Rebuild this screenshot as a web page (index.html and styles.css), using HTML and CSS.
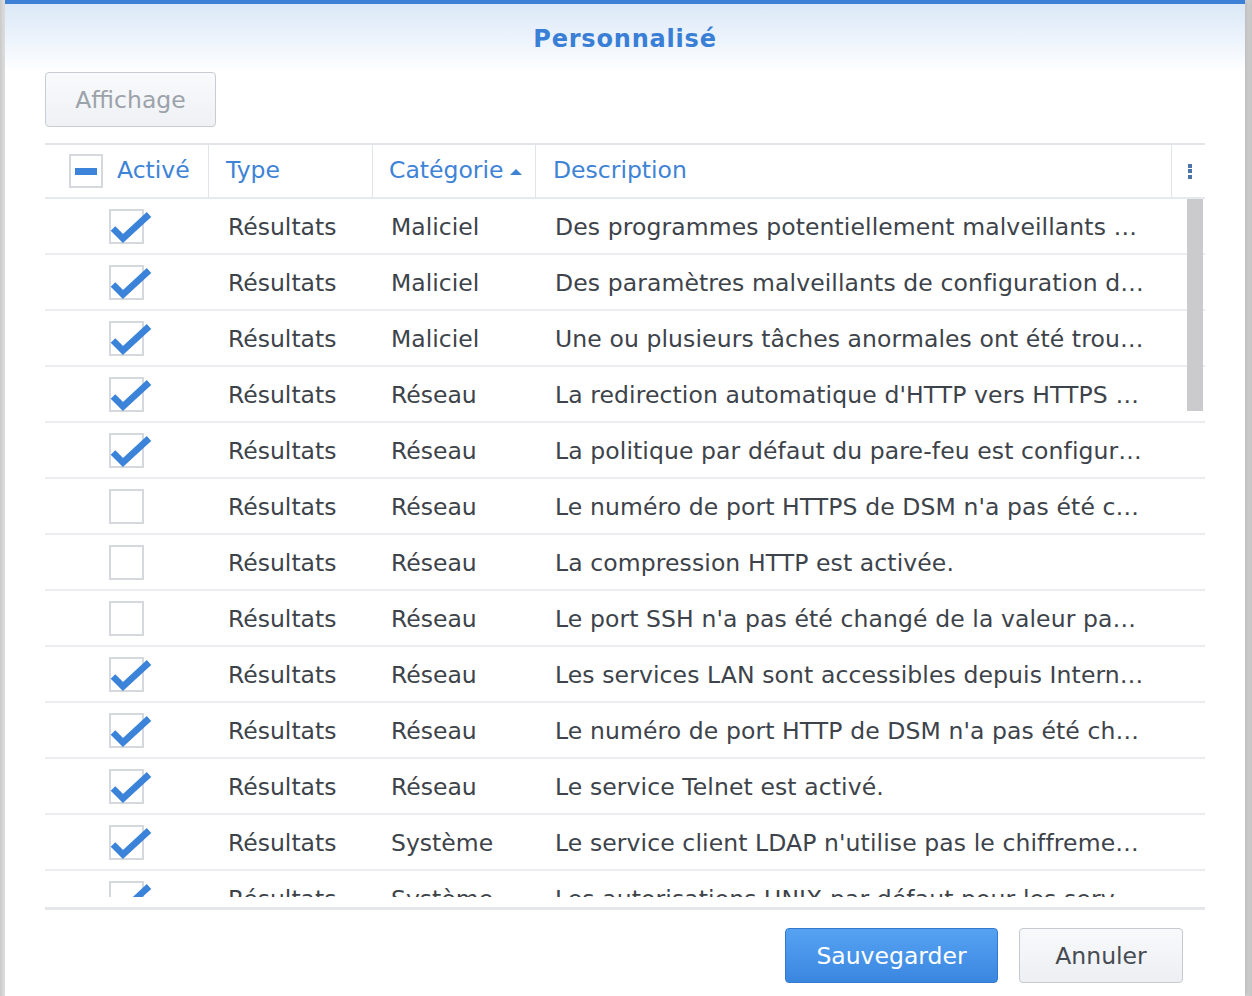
FILE: index.html
```html
<!DOCTYPE html>
<html lang="fr">
<head>
<meta charset="utf-8">
<title>Personnalisé</title>
<link rel="stylesheet" href="styles.css">
</head>
<body>
<div class="dialog">
  <div class="dlg-head"><h1 class="title">Personnalisé</h1></div>
  <div class="toolbar"><button class="btn btn-disabled">Affichage</button></div>
  <div class="grid">
    <div class="grid-head">
      <div class="hc hc-check"><span class="cb cb-head"><span class="minus"></span></span><span class="htext">Activé</span></div>
      <div class="hc hc-type"><span class="htext">Type</span></div>
      <div class="hc hc-cat"><span class="htext">Catégorie</span><span class="sort-up"></span></div>
      <div class="hc hc-desc"><span class="htext">Description</span></div>
      <div class="hc hc-menu"><span class="kebab"><i></i><i></i><i></i></span></div>
    </div>
    <div class="grid-body">
      <div class="row"><div class="c c-check"><span class="cb on"></span></div><div class="c c-type">Résultats</div><div class="c c-cat">Maliciel</div><div class="c c-desc">Des programmes potentiellement malveillants …</div></div>
      <div class="row"><div class="c c-check"><span class="cb on"></span></div><div class="c c-type">Résultats</div><div class="c c-cat">Maliciel</div><div class="c c-desc">Des paramètres malveillants de configuration d…</div></div>
      <div class="row"><div class="c c-check"><span class="cb on"></span></div><div class="c c-type">Résultats</div><div class="c c-cat">Maliciel</div><div class="c c-desc">Une ou plusieurs tâches anormales ont été trou…</div></div>
      <div class="row"><div class="c c-check"><span class="cb on"></span></div><div class="c c-type">Résultats</div><div class="c c-cat">Réseau</div><div class="c c-desc">La redirection automatique d'HTTP vers HTTPS …</div></div>
      <div class="row"><div class="c c-check"><span class="cb on"></span></div><div class="c c-type">Résultats</div><div class="c c-cat">Réseau</div><div class="c c-desc">La politique par défaut du pare-feu est configur…</div></div>
      <div class="row"><div class="c c-check"><span class="cb"></span></div><div class="c c-type">Résultats</div><div class="c c-cat">Réseau</div><div class="c c-desc">Le numéro de port HTTPS de DSM n'a pas été c…</div></div>
      <div class="row"><div class="c c-check"><span class="cb"></span></div><div class="c c-type">Résultats</div><div class="c c-cat">Réseau</div><div class="c c-desc">La compression HTTP est activée.</div></div>
      <div class="row"><div class="c c-check"><span class="cb"></span></div><div class="c c-type">Résultats</div><div class="c c-cat">Réseau</div><div class="c c-desc">Le port SSH n'a pas été changé de la valeur pa…</div></div>
      <div class="row"><div class="c c-check"><span class="cb on"></span></div><div class="c c-type">Résultats</div><div class="c c-cat">Réseau</div><div class="c c-desc">Les services LAN sont accessibles depuis Intern…</div></div>
      <div class="row"><div class="c c-check"><span class="cb on"></span></div><div class="c c-type">Résultats</div><div class="c c-cat">Réseau</div><div class="c c-desc">Le numéro de port HTTP de DSM n'a pas été ch…</div></div>
      <div class="row"><div class="c c-check"><span class="cb on"></span></div><div class="c c-type">Résultats</div><div class="c c-cat">Réseau</div><div class="c c-desc">Le service Telnet est activé.</div></div>
      <div class="row"><div class="c c-check"><span class="cb on"></span></div><div class="c c-type">Résultats</div><div class="c c-cat">Système</div><div class="c c-desc">Le service client LDAP n'utilise pas le chiffreme…</div></div>
      <div class="row"><div class="c c-check"><span class="cb on"></span></div><div class="c c-type">Résultats</div><div class="c c-cat">Système</div><div class="c c-desc">Les autorisations UNIX par défaut pour les serv…</div></div>
      <div class="scroll-thumb"></div>
    </div>
    <div class="grid-foot"></div>
  </div>
  <div class="footer">
    <button class="btn btn-primary">Sauvegarder</button>
    <button class="btn btn-default">Annuler</button>
  </div>
</div>
</body>
</html>
```

FILE: styles.css
```css
* { box-sizing: border-box; }
html, body { margin: 0; padding: 0; }
body {
  width: 1252px;
  height: 996px;
  overflow: hidden;
  background: linear-gradient(to right, #c9c9c9 0, #e2e2e2 5px, #e2e2e2 1245px, #c4c4c4 1252px);
  font-family: "DejaVu Sans", Verdana, sans-serif;
}
.dialog {
  margin: 0 7px 0 5px;
  width: 1240px;
  height: 996px;
  background: #fff;
  border-top: 4px solid #3c81d6;
  box-shadow: 2px 0 4px rgba(0,0,0,0.18);
  display: flex;
  flex-direction: column;
}
.dlg-head {
  height: 68px;
  background: linear-gradient(to bottom, #dbe8f7 0%, #eef4fc 55%, #ffffff 100%);
  display: flex;
  align-items: center;
  justify-content: center;
}
.title {
  margin: 0;
  padding-top: 1px;
  font-size: 24px;
  font-weight: bold;
  color: #3a7fd6;
  letter-spacing: 0.8px;
}
.toolbar {
  padding: 0 40px;
  height: 71px;
}
.btn {
  font-family: "DejaVu Sans", Verdana, sans-serif;
  font-size: 23.5px;
  height: 55px;
  border-radius: 4px;
  padding: 0;
}
.btn-disabled {
  width: 171px;
  color: #9ca2aa;
  border: 1px solid #c8cdd3;
  background: linear-gradient(to bottom, #f9fafc, #eef1f5);
}
.grid {
  margin: 0 40px;
  width: 1160px;
  border-top: 2px solid #e1e5ea;
}
.grid-head {
  display: flex;
  height: 54px;
  border-bottom: 2px solid #e6e9ed;
}
.hc {
  display: flex;
  align-items: center;
  color: #3e83d6;
  font-size: 23.5px;
  border-right: 1px solid #e1e5ea;
}
.hc-check { width: 164px; padding-left: 24px; }
.hc-type { width: 164px; padding-left: 17px; }
.hc-cat { width: 163px; padding-left: 16px; }
.hc-desc { width: 636px; padding-left: 17px; }
.hc-menu { width: 33px; border-right: 0; justify-content: center; }
.htext { line-height: 1; }
.cb {
  display: inline-block;
  position: relative;
  width: 35px;
  height: 35px;
  border: 2px solid #d5d8dc;
  background: #fff;
  flex: none;
}
.cb-head { width: 34px; height: 34px; margin-right: 14px; }
.minus {
  position: absolute;
  left: 4px;
  top: 12px;
  width: 22px;
  height: 7px;
  background: #3b84da;
}
.cb.on::after {
  content: "";
  position: absolute;
  left: -2px;
  top: -2px;
  width: 46px;
  height: 38px;
  background: no-repeat 0 0 / 46px 38px url("data:image/svg+xml,%3Csvg xmlns='http://www.w3.org/2000/svg' width='46' height='38' viewBox='0 0 46 38'%3E%3Cpolyline points='4,19.5 14,29.5 40,5.5' fill='none' stroke='%233b83d9' stroke-width='6.5' stroke-linejoin='miter'/%3E%3C/svg%3E");
}
.sort-up {
  display: inline-block;
  width: 0;
  height: 0;
  margin-left: 7px;
  margin-top: 2px;
  border-left: 6px solid transparent;
  border-right: 6px solid transparent;
  border-bottom: 6px solid #3e83d6;
}
.kebab { display: flex; flex-direction: column; gap: 1.5px; margin-left: 2px; }
.kebab i { display: block; width: 4px; height: 4px; background: #4d74a8; }
.grid-body {
  position: relative;
  height: 698px;
  overflow: hidden;
}
.row {
  display: flex;
  height: 56px;
  border-bottom: 2px solid #eaecef;
  align-items: center;
  font-size: 23.5px;
  color: #3d434a;
}
.c { white-space: nowrap; overflow: hidden; text-overflow: ellipsis; padding-top: 2px; }
.c-check { width: 163px; display: flex; justify-content: center; padding-top: 1px; }
.c-type { width: 164px; padding-left: 20px; }
.c-cat { width: 163px; padding-left: 19px; }
.c-desc { width: 612px; padding-left: 20px; letter-spacing: 0.1px; }
.scroll-thumb {
  position: absolute;
  right: 2px;
  top: 0;
  width: 16px;
  height: 212px;
  background: #cbcbcd;
}
.grid-foot {
  height: 13px;
  border-bottom: 3px solid #e4e6e9;
}
.footer {
  display: flex;
  justify-content: flex-end;
  gap: 21px;
  padding: 18px 62px 0 0;
}
.btn-primary {
  width: 213px;
  color: #fff;
  border: 1px solid #3479cf;
  background: linear-gradient(to bottom, #55a2f3, #3b87e0);
}
.btn-default {
  width: 164px;
  color: #474c53;
  border: 1px solid #c5cad0;
  background: linear-gradient(to bottom, #f8f9fb, #eceff3);
}
```
